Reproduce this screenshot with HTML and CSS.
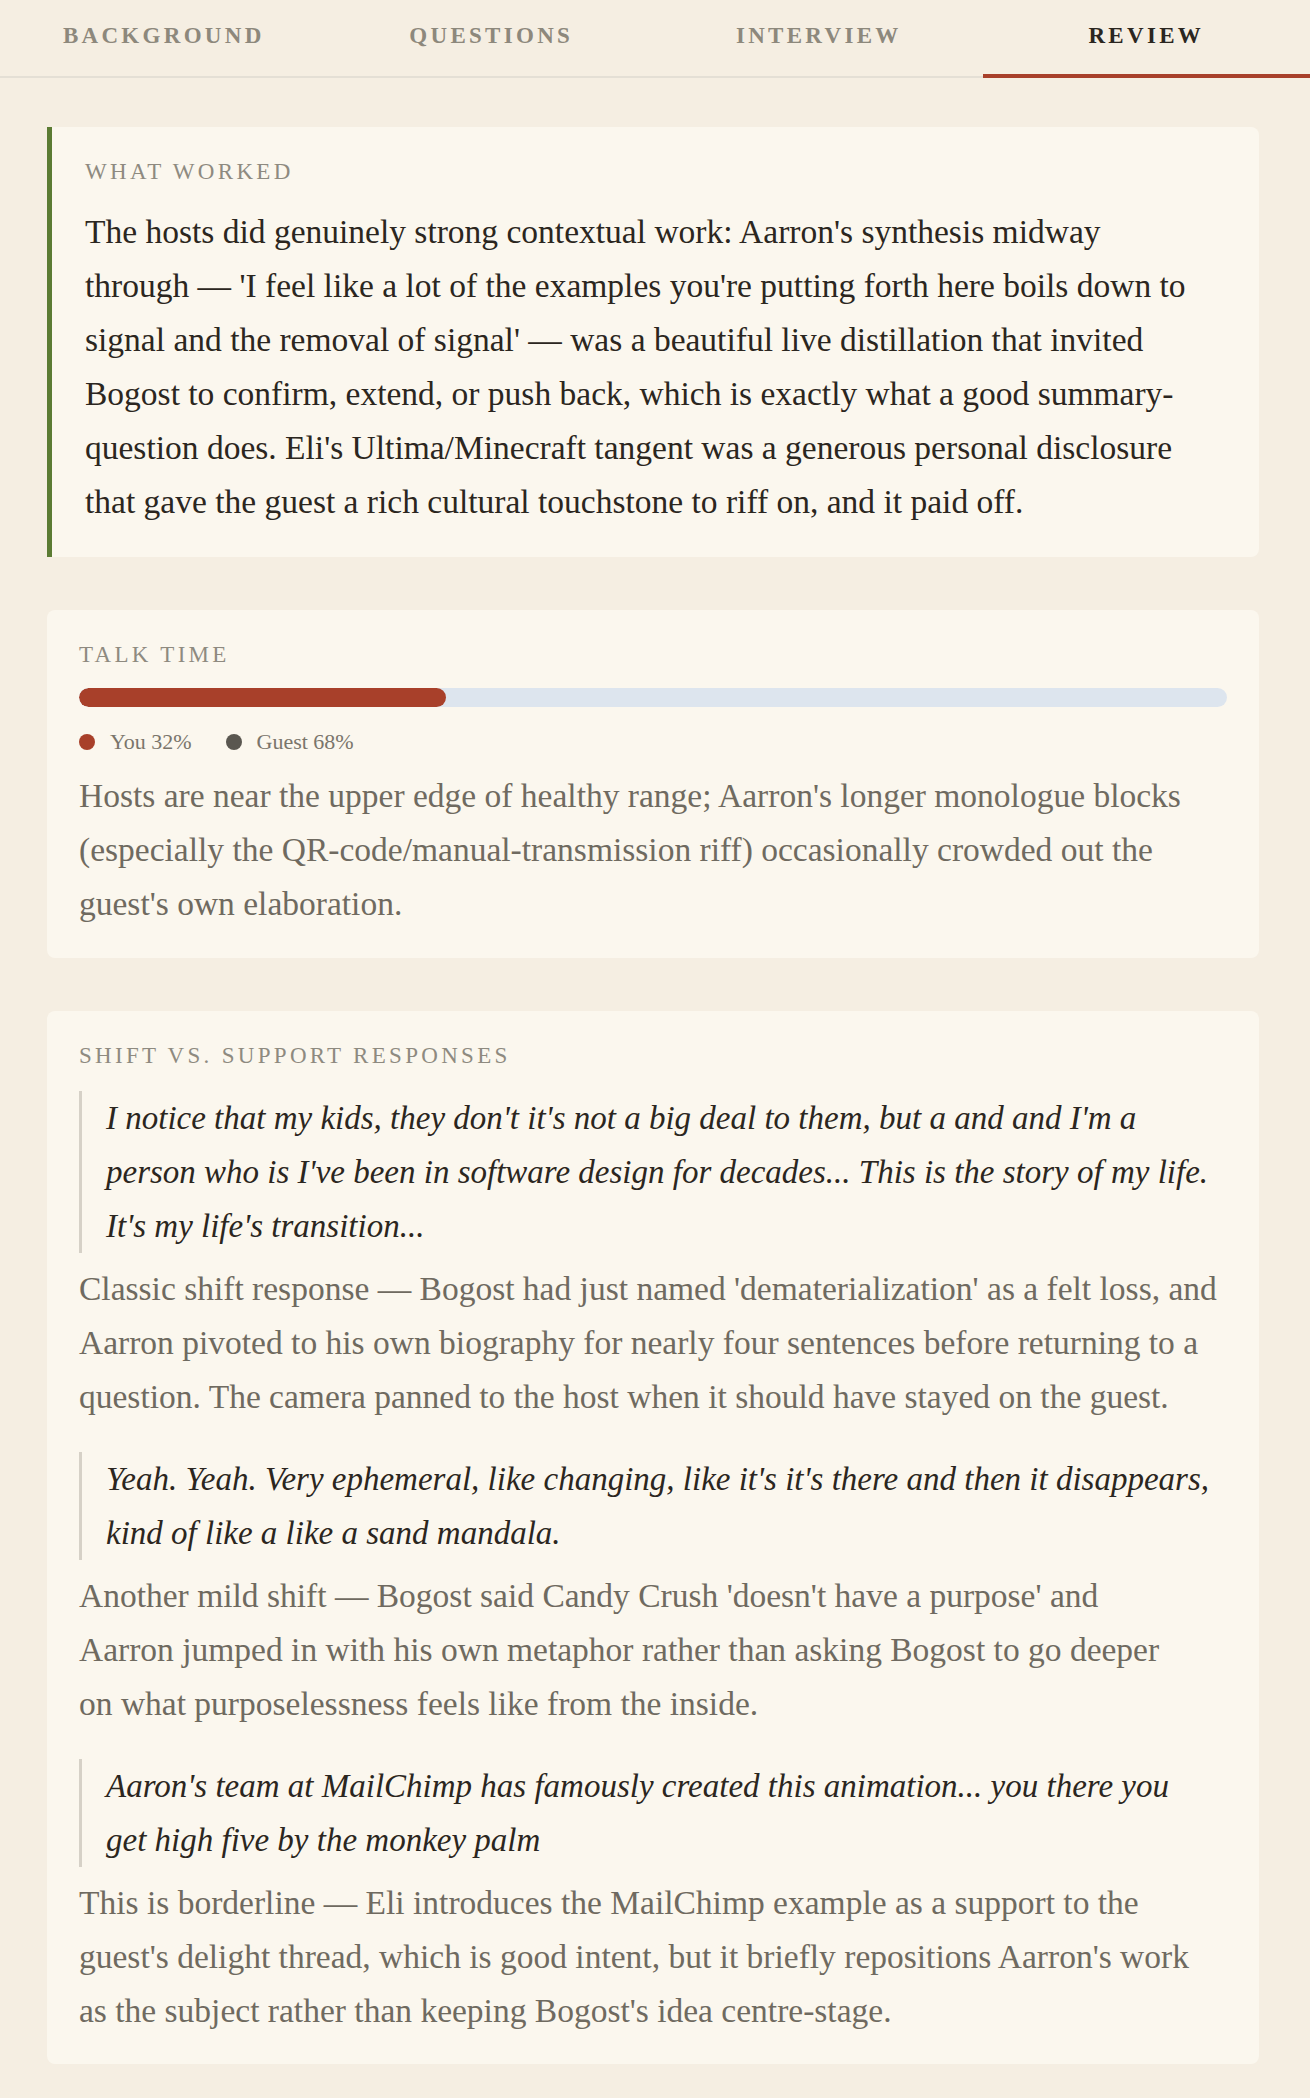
FILE: index.html
```html
<!DOCTYPE html>
<html lang="en">
<head>
<meta charset="utf-8">
<title>Review</title>
<link rel="stylesheet" href="styles.css">
</head>
<body>
<nav class="tabs">
  <div class="tab">Background</div>
  <div class="tab">Questions</div>
  <div class="tab">Interview</div>
  <div class="tab active">Review</div>
</nav>
<main class="content">
  <section class="card card-worked">
    <h2 class="label">What worked</h2>
    <p class="text text-dark">The hosts did genuinely strong contextual work: Aarron's synthesis midway<br>through — 'I feel like a lot of the examples you're putting forth here boils down to<br>signal and the removal of signal' — was a beautiful live distillation that invited<br>Bogost to confirm, extend, or push back, which is exactly what a good summary-<br>question does. Eli's Ultima/Minecraft tangent was a generous personal disclosure<br>that gave the guest a rich cultural touchstone to riff on, and it paid off.</p>
  </section>

  <section class="card card-talk">
    <h2 class="label">Talk time</h2>
    <div class="bar"><div class="bar-fill" style="width:32%"></div></div>
    <div class="legend">
      <span class="legend-item"><span class="dot dot-you"></span>You 32%</span>
      <span class="legend-item"><span class="dot dot-guest"></span>Guest 68%</span>
    </div>
    <p class="text text-muted">Hosts are near the upper edge of healthy range; Aarron's longer monologue blocks<br>(especially the QR-code/manual-transmission riff) occasionally crowded out the<br>guest's own elaboration.</p>
  </section>

  <section class="card">
    <h2 class="label">Shift vs. support responses</h2>
    <div class="response">
      <blockquote class="quote">I notice that my kids, they don't it's not a big deal to them, but a and and I'm a<br>person who is I've been in software design for decades... This is the story of my life. It's my life's transition...</blockquote>
      <p class="text text-muted">Classic shift response — Bogost had just named 'dematerialization' as a felt loss, and<br>Aarron pivoted to his own biography for nearly four sentences before returning to a<br>question. The camera panned to the host when it should have stayed on the guest.</p>
    </div>
    <div class="response">
      <blockquote class="quote">Yeah. Yeah. Very ephemeral, like changing, like it's it's there and then it disappears,<br>kind of like a like a sand mandala.</blockquote>
      <p class="text text-muted">Another mild shift — Bogost said Candy Crush 'doesn't have a purpose' and<br>Aarron jumped in with his own metaphor rather than asking Bogost to go deeper<br>on what purposelessness feels like from the inside.</p>
    </div>
    <div class="response">
      <blockquote class="quote">Aaron's team at MailChimp has famously created this animation... you there you<br>get high five by the monkey palm</blockquote>
      <p class="text text-muted">This is borderline — Eli introduces the MailChimp example as a support to the<br>guest's delight thread, which is good intent, but it briefly repositions Aarron's work<br>as the subject rather than keeping Bogost's idea centre-stage.</p>
    </div>
  </section>
</main>
</body>
</html>
```
FILE: styles.css
```css
* { box-sizing: border-box; }

body {
  margin: 0;
  background: #f5eee2;
  font-family: "Liberation Serif", "Times New Roman", serif;
  color: #2b2620;
}

.tabs {
  display: flex;
  border-bottom: 2px solid #e4dfd5;
}

.tab {
  flex: 1;
  height: 76px;
  padding-bottom: 4px;
  display: flex;
  align-items: center;
  justify-content: center;
  font-weight: 700;
  font-size: 23px;
  letter-spacing: 3.3px;
  text-transform: uppercase;
  color: #8d887c;
  position: relative;
}

.tab.active {
  color: #2b2620;
}

.tab.active::after {
  content: "";
  position: absolute;
  left: 0;
  right: 0;
  bottom: -2px;
  height: 4px;
  background: #a8402a;
}

.content {
  padding: 49px 51px 36px 47px;
  display: flex;
  flex-direction: column;
  gap: 53px;
}

.card {
  background: #fbf7ee;
  border-radius: 8px;
  padding: 32px 32px 26px;
}

.card-worked {
  border-left: 5px solid #5b7b33;
  border-radius: 0 8px 8px 0;
  padding-left: 33px;
  padding-bottom: 28px;
}

.card-talk {
  padding-bottom: 27px;
}

.label {
  margin: 0 0 20px;
  font-size: 23px;
  line-height: 26px;
  font-weight: 400;
  letter-spacing: 3.3px;
  text-transform: uppercase;
  color: #8e8a80;
}

.text {
  margin: 0;
  font-size: 33.5px;
  line-height: 54px;
  white-space: nowrap;
}

.text-dark {
  color: #2b2620;
}

.text-muted {
  color: #6f6a60;
}

.bar {
  height: 19px;
  margin-top: 1px;
  border-radius: 10px;
  background: #dde5ee;
  overflow: hidden;
}

.bar-fill {
  height: 100%;
  background: #a8402a;
  border-radius: 10px;
}

.legend {
  display: flex;
  gap: 34px;
  margin: 22px 0 14px;
  font-size: 22px;
  line-height: 26px;
  color: #7a756b;
}

.legend-item {
  display: flex;
  align-items: center;
  gap: 15px;
}

.dot {
  width: 16px;
  height: 16px;
  border-radius: 50%;
}

.dot-you { background: #a8402a; }
.dot-guest { background: #5a5750; }

.response:first-of-type {
  padding-top: 2px;
}

.response + .response {
  margin-top: 28px;
}

.quote {
  margin: 0 0 9px;
  padding-left: 24px;
  border-left: 3px solid #d6d1c7;
  font-style: italic;
  font-size: 33px;
  line-height: 54px;
  color: #2b2620;
}
```
